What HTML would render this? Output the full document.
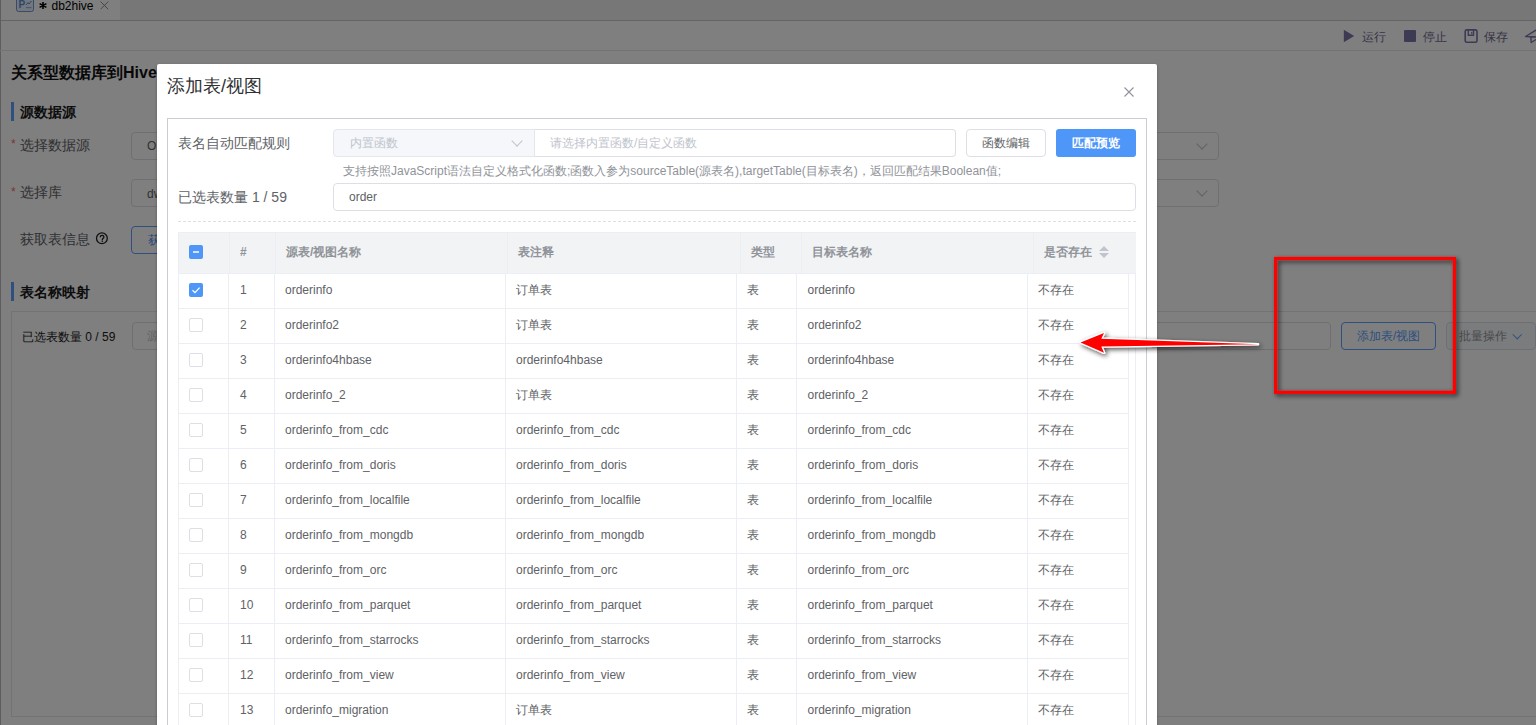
<!DOCTYPE html>
<html><head><meta charset="utf-8">
<style>
*{box-sizing:border-box}
html,body{margin:0;padding:0}
body{width:1536px;height:725px;overflow:hidden;position:relative;background:#fff;font-family:"Liberation Sans",sans-serif;color:#606266}
.a{position:absolute}
.t{position:absolute;white-space:nowrap}
.ov{position:absolute;left:0;top:0;width:1536px;height:725px;background:rgba(0,0,0,.5)}
.box{position:absolute;border:1px solid #dcdfe6;border-radius:4px;background:#fff}
.chev{position:absolute;width:8px;height:8px;border-right:1px solid #c0c4cc;border-bottom:1px solid #c0c4cc;transform:rotate(45deg)}
.hl{position:absolute;height:1px;background:#ebeef5}
.vl{position:absolute;width:1px;background:#ebeef5}
.cb{position:absolute;width:14px;height:14px;border:1px solid #dcdfe6;border-radius:2px;background:#fff}
.cell{position:absolute;font-size:12px;line-height:35px;height:35px;color:#606266;white-space:nowrap}
.hc{position:absolute;font-size:12px;line-height:41px;height:41px;top:232px;color:#909399;font-weight:bold;white-space:nowrap}
</style></head>
<body>


<div class="a" style="left:0;top:0;width:1536px;height:20px;background:#efefef"></div>
<div class="a" style="left:0;top:0;width:120px;height:20px;background:#fff"></div>
<div class="a" style="left:0;top:20px;width:1536px;height:1px;background:#c8c8c8"></div>
<div class="a" style="left:0;top:0;width:1px;height:725px;background:#bcbcbc"></div>
<!-- tab icon -->
<div class="a" style="left:16px;top:-7px;width:18px;height:19px;border:1.2px solid #6a9ad6;border-radius:2.5px;background:#e9f1fb"></div>
<div class="t" style="left:18.5px;top:-1.5px;font-size:10px;line-height:11px;font-weight:bold;color:#5b8fd6">P</div>
<svg class="a" style="left:25px;top:0px" width="8" height="9" viewBox="0 0 8 9"><path d="M1 5L3 2.5L4 4L6.5 1" fill="none" stroke="#5b8fd6" stroke-width="1"/><rect x="1" y="7" width="5.5" height="1.2" fill="#8fb5e6"/></svg>
<svg class="a" style="left:39px;top:2px" width="8" height="7" viewBox="0 0 8 7"><path d="M4 0V7M0.6 1.6L7.4 5.4M7.4 1.6L0.6 5.4" stroke="#000" stroke-width="1.6"/></svg>
<div class="t" style="left:51.5px;top:-1.5px;font-size:12px;line-height:14px;color:#000">db2hive</div>
<svg class="a" style="left:100px;top:1px" width="9" height="9" viewBox="0 0 9 9"><path d="M0.6 0.6L8.2 8.2M8.2 0.6L0.6 8.2" stroke="#808080" stroke-width="0.9"/></svg>
<div class="a" style="left:0;top:50px;width:1536px;height:1px;background:#e6e6e6"></div>
<!-- toolbar -->
<svg class="a" style="left:1343px;top:29px" width="12" height="14" viewBox="0 0 12 14"><path d="M0.8 0.8L11.2 7L0.8 13.2Z" fill="#7a77a6"/></svg>
<div class="t" style="left:1362px;top:30px;font-size:12px;line-height:14px;color:#6e6a90">运行</div>
<div class="a" style="left:1403.5px;top:29.5px;width:12.5px;height:12.8px;background:#7a77a6;border-radius:1px"></div>
<div class="t" style="left:1423px;top:30px;font-size:12px;line-height:14px;color:#6e6a90">停止</div>
<svg class="a" style="left:1463px;top:28px" width="16" height="16" viewBox="0 0 16 16"><rect x="2.2" y="1.9" width="11.8" height="12.4" rx="1.6" fill="none" stroke="#7a77a6" stroke-width="1.6"/><path d="M5.3 2V7.3H10.5V2" fill="none" stroke="#7a77a6" stroke-width="1.4"/><rect x="8" y="4.2" width="1.4" height="1.6" fill="#7a77a6"/></svg>
<div class="t" style="left:1484px;top:30px;font-size:12px;line-height:14px;color:#6e6a90">保存</div>
<svg class="a" style="left:1520px;top:26px" width="16" height="20" viewBox="0 0 16 20"><path d="M17 3.5L5.5 10.5L16 11M10.8 11L11.2 16.5L16 13.5" fill="none" stroke="#7a77a6" stroke-width="1.4" stroke-linejoin="round"/></svg>
<!-- title -->
<div class="t" style="left:11px;top:63.7px;font-size:16px;line-height:18px;font-weight:bold;color:#111">关系型数据库到Hive</div>
<div class="a" style="left:11px;top:102px;width:3px;height:19px;background:#5aa0ff"></div>
<div class="t" style="left:20px;top:104px;font-size:14px;line-height:16px;font-weight:bold;color:#1a1a1a">源数据源</div>
<div class="t" style="left:11px;top:137px;font-size:12px;line-height:14px;color:#f56c6c">*</div>
<div class="t" style="left:20px;top:137px;font-size:14px;line-height:16px;color:#606266">选择数据源</div>
<div class="box" style="left:131px;top:132px;width:1088px;height:28px"></div>
<div class="t" style="left:147px;top:138.5px;font-size:12px;line-height:14px;color:#606266">O</div>
<div class="chev" style="left:1198px;top:140px"></div>
<div class="t" style="left:11px;top:185px;font-size:12px;line-height:14px;color:#f56c6c">*</div>
<div class="t" style="left:20px;top:184px;font-size:14px;line-height:16px;color:#606266">选择库</div>
<div class="box" style="left:131px;top:179px;width:1088px;height:28px"></div>
<div class="t" style="left:147px;top:186.5px;font-size:12px;line-height:14px;color:#606266">dw</div>
<div class="chev" style="left:1198px;top:187px"></div>
<div class="t" style="left:20px;top:231px;font-size:14px;line-height:16px;color:#606266">获取表信息</div>
<svg class="a" style="left:94px;top:231px" width="16" height="16" viewBox="0 0 16 16"><circle cx="7.9" cy="7.3" r="5.4" fill="none" stroke="#222" stroke-width="1.3"/><path d="M6.3 6.2C6.3 4.9 7.1 4.3 8.1 4.3C9.1 4.3 9.9 5 9.9 5.9C9.9 7.2 8.3 7.3 8.3 8.9" fill="none" stroke="#222" stroke-width="1.3"/><rect x="7.6" y="9.5" width="1.4" height="1.4" fill="#222"/></svg>
<div class="box" style="left:131px;top:226px;width:100px;height:28px;border-color:#5aa0ff"></div>
<div class="t" style="left:147.5px;top:232.5px;font-size:12px;line-height:14px;color:#4f8ff0">获取</div>
<div class="a" style="left:11px;top:282px;width:3px;height:19px;background:#5aa0ff"></div>
<div class="t" style="left:20px;top:284px;font-size:14px;line-height:16px;font-weight:bold;color:#1a1a1a">表名称映射</div>
<div class="a" style="left:11px;top:311px;width:1540px;height:406px;border:1px solid #e4e6ee"></div>
<div class="t" style="left:22px;top:329.8px;font-size:12px;line-height:14px;color:#1a1a1a">已选表数量 0 / 59</div>
<div class="box" style="left:132px;top:322px;width:1199px;height:28px"></div>
<div class="t" style="left:147px;top:329px;font-size:12px;line-height:14px;color:#c0c4cc">源</div>
<div class="box" style="left:1341px;top:322px;width:95px;height:28px;border-color:#5aa0ff"></div>
<div class="t" style="left:1357px;top:329px;font-size:12px;line-height:14px;color:#5aa0ff">添加表/视图</div>
<div class="box" style="left:1446px;top:322px;width:90px;height:28px;background:#f7f8fa"></div>
<div class="t" style="left:1459px;top:329px;font-size:12px;line-height:14px;color:#909399">批量操作</div>
<div class="chev" style="left:1513.5px;top:330.5px;width:6.5px;height:6.5px;border-color:#5aa0ff"></div>

<div class="ov"></div>

<div class="a" style="left:157px;top:64px;width:1000px;height:700px;background:#fff;border-radius:2px;box-shadow:0 1px 3px rgba(0,0,0,.3)"></div>
<div class="t" style="left:167px;top:75px;font-size:18px;line-height:22px;color:#303133">添加表/视图</div>
<svg class="a" style="left:1124px;top:87px" width="10" height="10" viewBox="0 0 10 10"><path d="M0.5 0.5L9.5 9.5M9.5 0.5L0.5 9.5" stroke="#909399" stroke-width="1.1"/></svg>
<div class="a" style="left:167px;top:118px;width:980px;height:700px;border:1px solid #c8cdd6;border-bottom:none"></div>
<div class="t" style="left:178px;top:134px;font-size:14px;line-height:18px;color:#606266">表名自动匹配规则</div>
<div class="a" style="left:333px;top:129px;width:202px;height:28px;border:1px solid #e4e7ed;border-radius:4px 0 0 4px;background:#f5f7fa"></div>
<div class="t" style="left:350px;top:136px;font-size:12px;line-height:14px;color:#c0c4cc">内置函数</div>
<div class="chev" style="left:513px;top:137px;border-color:#c0c4cc"></div>
<div class="a" style="left:534px;top:129px;width:422px;height:28px;border:1px solid #dcdfe6;border-left:1px solid #e4e7ed;border-radius:0 4px 4px 0;background:#fff"></div>
<div class="t" style="left:550px;top:136px;font-size:12px;line-height:14px;color:#c0c4cc">请选择内置函数/自定义函数</div>
<div class="box" style="left:966px;top:129px;width:80px;height:28px"></div>
<div class="t" style="left:982px;top:136px;font-size:12px;line-height:14px;color:#606266">函数编辑</div>
<div class="a" style="left:1056px;top:129px;width:80px;height:28px;background:#4f96f9;border-radius:3px"></div>
<div class="t" style="left:1072px;top:136px;font-size:12px;line-height:14px;color:#fff;font-weight:bold">匹配预览</div>
<div class="t" style="left:343px;top:164px;font-size:12px;line-height:14px;color:#909399">支持按照JavaScript语法自定义格式化函数;函数入参为sourceTable(源表名),targetTable(目标表名)，返回匹配结果Boolean值;</div>
<div class="t" style="left:178px;top:188px;font-size:14px;line-height:18px;color:#606266">已选表数量 1 / 59</div>
<div class="box" style="left:333px;top:183px;width:803px;height:28px"></div>
<div class="t" style="left:349px;top:190px;font-size:12px;line-height:14px;color:#606266">order</div>
<div class="a" style="left:178px;top:221px;width:958px;height:0;border-top:1px dashed #dcdfe6"></div>

<div class="a" style="left:178px;top:232px;width:958px;height:41px;background:#f2f3f5"></div>
<div class="hl" style="left:178px;top:232px;width:958px"></div>
<div class="vl" style="left:229px;top:232px;height:41px"></div>
<div class="vl" style="left:275px;top:232px;height:41px"></div>
<div class="vl" style="left:507px;top:232px;height:41px"></div>
<div class="vl" style="left:740px;top:232px;height:41px"></div>
<div class="vl" style="left:801px;top:232px;height:41px"></div>
<div class="vl" style="left:1033px;top:232px;height:41px"></div>
<div class="hl" style="left:178px;top:273px;width:958px"></div>
<div class="vl" style="left:178px;top:232px;height:41px"></div>
<div class="a" style="left:189px;top:245px;width:14px;height:14px;background:#4f96f9;border-radius:2px"></div>
<div class="a" style="left:193px;top:251px;width:6px;height:2px;background:rgba(255,255,255,.75)"></div>
<div class="hc" style="left:240px">#</div>
<div class="hc" style="left:286px">源表/视图名称</div>
<div class="hc" style="left:518px">表注释</div>
<div class="hc" style="left:751px">类型</div>
<div class="hc" style="left:812px">目标表名称</div>
<div class="hc" style="left:1044px">是否存在</div>
<svg class="a" style="left:1099px;top:246px" width="10" height="12" viewBox="0 0 10 12"><path d="M5 0L10 5H0Z M0 7H10L5 12Z" fill="#c0c4cc"/></svg>
<div class="hl" style="left:178px;top:308px;width:950px"></div>
<div class="a" style="left:189px;top:283px;width:14px;height:14px;background:#4f96f9;border-radius:2px"></div>
<svg class="a" style="left:189px;top:283px" width="14" height="14" viewBox="0 0 14 14"><path d="M3.5 7.2L6 9.6L10.6 4.6" fill="none" stroke="#fff" stroke-width="1.3"/></svg>
<div class="cell" style="left:240px;top:273px">1</div>
<div class="cell" style="left:285px;top:273px">orderinfo</div>
<div class="cell" style="left:516px;top:273px">订单表</div>
<div class="cell" style="left:747px;top:273px">表</div>
<div class="cell" style="left:807.5px;top:273px">orderinfo</div>
<div class="cell" style="left:1037.5px;top:273px">不存在</div>
<div class="hl" style="left:178px;top:343px;width:950px"></div>
<div class="cb" style="left:189px;top:318px"></div>
<div class="cell" style="left:240px;top:308px">2</div>
<div class="cell" style="left:285px;top:308px">orderinfo2</div>
<div class="cell" style="left:516px;top:308px">订单表</div>
<div class="cell" style="left:747px;top:308px">表</div>
<div class="cell" style="left:807.5px;top:308px">orderinfo2</div>
<div class="cell" style="left:1037.5px;top:308px">不存在</div>
<div class="hl" style="left:178px;top:378px;width:950px"></div>
<div class="cb" style="left:189px;top:353px"></div>
<div class="cell" style="left:240px;top:343px">3</div>
<div class="cell" style="left:285px;top:343px">orderinfo4hbase</div>
<div class="cell" style="left:516px;top:343px">orderinfo4hbase</div>
<div class="cell" style="left:747px;top:343px">表</div>
<div class="cell" style="left:807.5px;top:343px">orderinfo4hbase</div>
<div class="cell" style="left:1037.5px;top:343px">不存在</div>
<div class="hl" style="left:178px;top:413px;width:950px"></div>
<div class="cb" style="left:189px;top:388px"></div>
<div class="cell" style="left:240px;top:378px">4</div>
<div class="cell" style="left:285px;top:378px">orderinfo_2</div>
<div class="cell" style="left:516px;top:378px">订单表</div>
<div class="cell" style="left:747px;top:378px">表</div>
<div class="cell" style="left:807.5px;top:378px">orderinfo_2</div>
<div class="cell" style="left:1037.5px;top:378px">不存在</div>
<div class="hl" style="left:178px;top:448px;width:950px"></div>
<div class="cb" style="left:189px;top:423px"></div>
<div class="cell" style="left:240px;top:413px">5</div>
<div class="cell" style="left:285px;top:413px">orderinfo_from_cdc</div>
<div class="cell" style="left:516px;top:413px">orderinfo_from_cdc</div>
<div class="cell" style="left:747px;top:413px">表</div>
<div class="cell" style="left:807.5px;top:413px">orderinfo_from_cdc</div>
<div class="cell" style="left:1037.5px;top:413px">不存在</div>
<div class="hl" style="left:178px;top:483px;width:950px"></div>
<div class="cb" style="left:189px;top:458px"></div>
<div class="cell" style="left:240px;top:448px">6</div>
<div class="cell" style="left:285px;top:448px">orderinfo_from_doris</div>
<div class="cell" style="left:516px;top:448px">orderinfo_from_doris</div>
<div class="cell" style="left:747px;top:448px">表</div>
<div class="cell" style="left:807.5px;top:448px">orderinfo_from_doris</div>
<div class="cell" style="left:1037.5px;top:448px">不存在</div>
<div class="hl" style="left:178px;top:518px;width:950px"></div>
<div class="cb" style="left:189px;top:493px"></div>
<div class="cell" style="left:240px;top:483px">7</div>
<div class="cell" style="left:285px;top:483px">orderinfo_from_localfile</div>
<div class="cell" style="left:516px;top:483px">orderinfo_from_localfile</div>
<div class="cell" style="left:747px;top:483px">表</div>
<div class="cell" style="left:807.5px;top:483px">orderinfo_from_localfile</div>
<div class="cell" style="left:1037.5px;top:483px">不存在</div>
<div class="hl" style="left:178px;top:553px;width:950px"></div>
<div class="cb" style="left:189px;top:528px"></div>
<div class="cell" style="left:240px;top:518px">8</div>
<div class="cell" style="left:285px;top:518px">orderinfo_from_mongdb</div>
<div class="cell" style="left:516px;top:518px">orderinfo_from_mongdb</div>
<div class="cell" style="left:747px;top:518px">表</div>
<div class="cell" style="left:807.5px;top:518px">orderinfo_from_mongdb</div>
<div class="cell" style="left:1037.5px;top:518px">不存在</div>
<div class="hl" style="left:178px;top:588px;width:950px"></div>
<div class="cb" style="left:189px;top:563px"></div>
<div class="cell" style="left:240px;top:553px">9</div>
<div class="cell" style="left:285px;top:553px">orderinfo_from_orc</div>
<div class="cell" style="left:516px;top:553px">orderinfo_from_orc</div>
<div class="cell" style="left:747px;top:553px">表</div>
<div class="cell" style="left:807.5px;top:553px">orderinfo_from_orc</div>
<div class="cell" style="left:1037.5px;top:553px">不存在</div>
<div class="hl" style="left:178px;top:623px;width:950px"></div>
<div class="cb" style="left:189px;top:598px"></div>
<div class="cell" style="left:240px;top:588px">10</div>
<div class="cell" style="left:285px;top:588px">orderinfo_from_parquet</div>
<div class="cell" style="left:516px;top:588px">orderinfo_from_parquet</div>
<div class="cell" style="left:747px;top:588px">表</div>
<div class="cell" style="left:807.5px;top:588px">orderinfo_from_parquet</div>
<div class="cell" style="left:1037.5px;top:588px">不存在</div>
<div class="hl" style="left:178px;top:658px;width:950px"></div>
<div class="cb" style="left:189px;top:633px"></div>
<div class="cell" style="left:240px;top:623px">11</div>
<div class="cell" style="left:285px;top:623px">orderinfo_from_starrocks</div>
<div class="cell" style="left:516px;top:623px">orderinfo_from_starrocks</div>
<div class="cell" style="left:747px;top:623px">表</div>
<div class="cell" style="left:807.5px;top:623px">orderinfo_from_starrocks</div>
<div class="cell" style="left:1037.5px;top:623px">不存在</div>
<div class="hl" style="left:178px;top:693px;width:950px"></div>
<div class="cb" style="left:189px;top:668px"></div>
<div class="cell" style="left:240px;top:658px">12</div>
<div class="cell" style="left:285px;top:658px">orderinfo_from_view</div>
<div class="cell" style="left:516px;top:658px">orderinfo_from_view</div>
<div class="cell" style="left:747px;top:658px">表</div>
<div class="cell" style="left:807.5px;top:658px">orderinfo_from_view</div>
<div class="cell" style="left:1037.5px;top:658px">不存在</div>
<div class="hl" style="left:178px;top:728px;width:950px"></div>
<div class="cb" style="left:189px;top:703px"></div>
<div class="cell" style="left:240px;top:693px">13</div>
<div class="cell" style="left:285px;top:693px">orderinfo_migration</div>
<div class="cell" style="left:516px;top:693px">订单表</div>
<div class="cell" style="left:747px;top:693px">表</div>
<div class="cell" style="left:807.5px;top:693px">orderinfo_migration</div>
<div class="cell" style="left:1037.5px;top:693px">不存在</div>
<div class="vl" style="left:178px;top:273px;height:460px"></div>
<div class="vl" style="left:228px;top:273px;height:460px"></div>
<div class="vl" style="left:274px;top:273px;height:460px"></div>
<div class="vl" style="left:505px;top:273px;height:460px"></div>
<div class="vl" style="left:736px;top:273px;height:460px"></div>
<div class="vl" style="left:796px;top:273px;height:460px"></div>
<div class="vl" style="left:1027px;top:273px;height:460px"></div>
<div class="vl" style="left:1128px;top:273px;height:460px"></div>
<div class="vl" style="left:1135px;top:273px;height:460px"></div>

<svg class="a" style="left:0;top:0" width="1536" height="725" viewBox="0 0 1536 725">
<defs>
<filter id="sh" filterUnits="userSpaceOnUse" x="1000" y="200" width="536" height="260"><feGaussianBlur in="SourceAlpha" stdDeviation="2.5"/><feOffset dx="1.5" dy="2" result="b"/><feComponentTransfer><feFuncA type="linear" slope="0.7"/></feComponentTransfer><feMerge><feMergeNode/><feMergeNode in="SourceGraphic"/></feMerge></filter>
</defs>
<rect x="1275.6" y="258.5" width="178.8" height="133.8" fill="none" stroke="#ff0000" stroke-width="3.2" filter="url(#sh)"/>
<g filter="url(#sh)">
<path d="M1080.5 342.4 L1104 333 L1101.3 338.8 L1258 344.2 L1101.3 346.5 L1104 352.8 Z" fill="#fff" stroke="#fff" stroke-width="2.6" stroke-linejoin="round"/>
<path d="M1080.5 342.4 L1104 333 L1101.3 338.8 L1258 344.2 L1101.3 346.5 L1104 352.8 Z" fill="#ff0000"/>
</g>
</svg>

</body></html>
